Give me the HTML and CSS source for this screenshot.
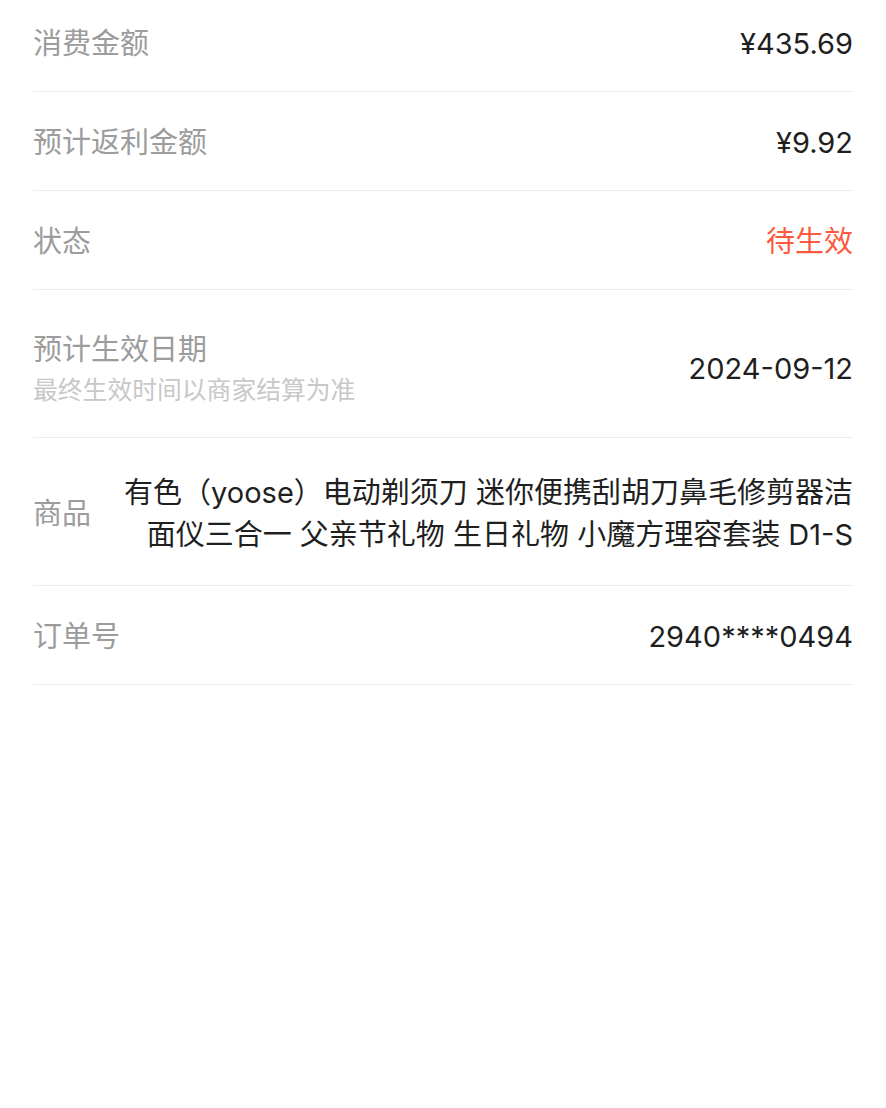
FILE: index.html
```html
<!DOCTYPE html>
<html lang="zh-CN">
<head>
  <meta charset="UTF-8">
  <meta name="viewport" content="width=device-width, initial-scale=1.0">
  <title>订单详情</title>
  <link rel="stylesheet" href="styles.css">
</head>
<body>
  <div class="detail-list">
    <div class="row">
      <div class="label">消费金额</div>
      <div class="value">¥435.69</div>
    </div>
    <div class="row">
      <div class="label">预计返利金额</div>
      <div class="value">¥9.92</div>
    </div>
    <div class="row">
      <div class="label">状态</div>
      <div class="value pending">待生效</div>
    </div>
    <div class="row row-date">
      <div class="label">
        <div>预计生效日期</div>
        <div class="label-sub">最终生效时间以商家结算为准</div>
      </div>
      <div class="value">2024-09-12</div>
    </div>
    <div class="row row-goods">
      <div class="label">商品</div>
      <div class="value goods-name">有色（yoose）电动剃须刀 迷你便携刮胡刀鼻毛修剪器洁面仪三合一 父亲节礼物 生日礼物 小魔方理容套装 D1-S</div>
    </div>
    <div class="row">
      <div class="label">订单号</div>
      <div class="value">2940****0494</div>
    </div>
  </div>
</body>
</html>
```

FILE: styles.css
```css
body {
  margin: 0;
  padding: 0 33px;
  background-color: #fff;
  font-family: Inter, "Noto Sans CJK SC", sans-serif;
  font-size: 29px;
  line-height: 42px;
  color: #1f1f1f;
}
.detail-list {
  margin-top: -7px; /* page is scrolled a little in the shot */
}
.row {
  display: flex;
  justify-content: space-between;
  align-items: center;
  padding: 30px 0 26px;
  border-bottom: 1px solid #ededed;
}
.label {
  color: #9c9c9c;
  flex-shrink: 0;
}
.label-sub {
  margin-top: 1px;
  font-size: 24.8px;
  line-height: 36px;
  color: #c8c8c8;
}
.value {
  text-align: right;
}
.pending {
  color: #fe5a40;
}
.row-date {
  padding: 39px 0 29px;
}
.row-goods {
  padding: 34px 0 29px;
}
.goods-name {
  flex: 1;
  margin-left: 20px;
}
```
